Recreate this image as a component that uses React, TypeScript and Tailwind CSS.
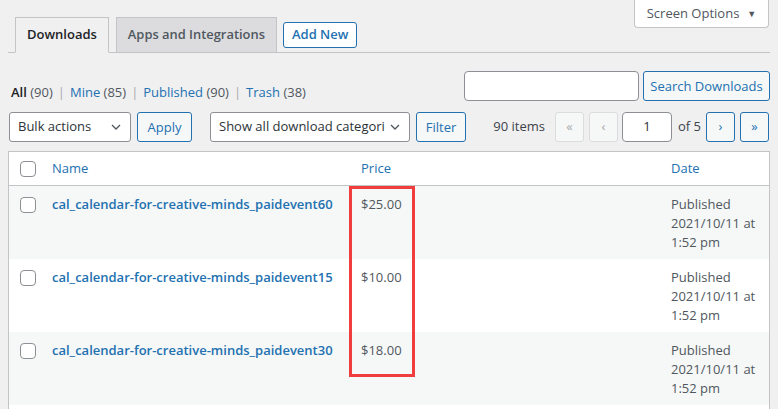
import { type ReactNode } from "react";

type Row = {
	title: string;
	price: string;
};

const rows: Row[] = [
	{ title: "cal_calendar-for-creative-minds_paidevent60", price: "$25.00" },
	{ title: "cal_calendar-for-creative-minds_paidevent15", price: "$10.00" },
	{ title: "cal_calendar-for-creative-minds_paidevent30", price: "$18.00" },
	{ title: "cal_calendar-for-creative-minds_paidevent45", price: "$20.00" },
];

function Chevron() {
	return (
		<svg width="16" height="16" viewBox="0 0 20 20" className="shrink-0 text-[#50575e]">
			<path d="M5 7.5l5 5 5-5" fill="none" stroke="currentColor" strokeWidth="1.6" />
		</svg>
	);
}

function Checkbox() {
	return <span className="block w-4 h-4 border border-[#8c8f94] rounded-[4px] bg-white" />;
}

function Button({ children, className = "" }: { children: ReactNode; className?: string }) {
	return (
		<button
			type="button"
			className={
				"shrink-0 h-[30px] flex items-center justify-center border border-[#2271b1] rounded-[3px] bg-[#f6f7f7] text-[#2271b1] text-[13px] leading-none whitespace-nowrap " +
				className
			}
		>
			{children}
		</button>
	);
}

function PageButton({ label, disabled }: { label: string; disabled?: boolean }) {
	return (
		<span
			className={
				"shrink-0 flex items-center justify-center w-[29px] h-[30px] rounded-[3px] border text-[13px] " +
				(disabled
					? "border-[#dcdcde] bg-[#f6f7f7] text-[#a7aaad]"
					: "border-[#2271b1] bg-[#f6f7f7] text-[#2271b1]")
			}
		>
			{label}
		</span>
	);
}

export default function App() {
	return (
		<div className="w-full h-[409px] overflow-hidden whitespace-nowrap bg-[#f0f0f1] text-[#3c434a] text-[13px] font-['Open_Sans',sans-serif]">
			{/* Tabs + screen options */}
			<div className="mx-2 flex justify-between items-start border-b border-[#c3c4c7]">
				<div className="flex items-center gap-[6px] pt-[17px] pl-[7px]">
					<span className="-mb-px h-[36px] px-[11px] flex items-center border border-[#c3c4c7] border-b-[#f0f0f1] bg-[#f0f0f1] text-[13px] font-semibold text-[#1d2327]">
						Downloads
					</span>
					<span className="-mb-px ml-[1px] h-[36px] px-[11px] flex items-center border border-[#c3c4c7] bg-[#dcdcde] text-[12.9px] font-semibold text-[#50575e]">
						Apps and Integrations
					</span>
					<span className="h-[26px] px-[8px] flex items-center border border-[#2271b1] rounded-[3px] bg-white text-[13px] font-semibold text-[#2271b1]">
						Add New
					</span>
				</div>
				<div className="mr-px h-[28px] w-[135px] flex items-center justify-center gap-[8px] border border-t-0 border-[#c3c4c7] rounded-b-[4px] bg-white text-[#50575e]">
					<span>Screen Options</span>
					<span className="text-[9px]">▼</span>
				</div>
			</div>

			{/* Views + search */}
			<div className="mt-[18px] ml-[11px] mr-2 flex justify-between items-start">
				<div className="mt-[12px] leading-[19px]">
					<span className="font-semibold text-[#1d2327]">All</span> <span className="text-[#50575e]">(90)</span>
					<span className="mx-[5px] text-[#a7aaad]">|</span>
					<span className="text-[#2271b1]">Mine</span> <span className="text-[#50575e]">(85)</span>
					<span className="mx-[5px] text-[#a7aaad]">|</span>
					<span className="text-[#2271b1]">Published</span> <span className="text-[#50575e]">(90)</span>
					<span className="mx-[5px] text-[#a7aaad]">|</span>
					<span className="text-[#2271b1]">Trash</span> <span className="text-[#50575e]">(38)</span>
				</div>
				<div className="flex gap-[4px]">
					<span className="w-[175px] h-[30px] border border-[#8c8f94] rounded-[4px] bg-white" />
					<Button className="w-[127px]">Search Downloads</Button>
				</div>
			</div>

			{/* Toolbar */}
			<div className="mt-[10px] ml-[9px] mr-[9px] flex items-center">
				<span className="shrink-0 w-[122px] h-[30px] pl-[8px] pr-[6px] flex items-center justify-between border border-[#8c8f94] rounded-[3px] bg-white text-[#2c3338]">
					Bulk actions
					<Chevron />
				</span>
				<Button className="ml-[6px] w-[55px]">Apply</Button>
				<span className="shrink-0 ml-[18px] w-[200px] h-[30px] pl-[8px] pr-[6px] flex items-center justify-between border border-[#8c8f94] rounded-[3px] bg-white text-[#2c3338]">
					<span className="overflow-hidden w-[166px]">Show all download categories</span>
					<Chevron />
				</span>
				<Button className="ml-[6px] w-[50px]">Filter</Button>
				<span className="ml-auto shrink-0 text-[#3c434a]">90 items</span>
				<span className="ml-[10px] flex items-center">
					<PageButton label="«" disabled />
					<span className="ml-[5px]">
						<PageButton label="‹" disabled />
					</span>
					<span className="shrink-0 ml-[4px] w-[50px] h-[30px] flex items-center justify-center border border-[#8c8f94] rounded-[4px] bg-white text-[#2c3338]">
						1
					</span>
					<span className="shrink-0 ml-[6px] mr-[5px]">of 5</span>
					<PageButton label="›" />
					<span className="ml-[5px]">
						<PageButton label="»" />
					</span>
				</span>
			</div>

			{/* Table */}
			<div className="relative mt-[9px] mx-2 border border-[#c3c4c7] bg-white">
				<div className="grid grid-cols-[33px_309px_310px_1fr] h-[34px] items-center border-b border-[#c3c4c7] text-[#2271b1]">
					<span className="pl-[11px]">
						<Checkbox />
					</span>
					<span className="pl-[10px]">Name</span>
					<span className="pl-[10px]">Price</span>
					<span className="pl-[10px]">Date</span>
				</div>
				{rows.map((row, i) => (
					<div
						key={row.title}
						className={
							"grid grid-cols-[33px_309px_310px_1fr] h-[73px] items-start leading-[19px] " +
							(i % 2 === 0 ? "bg-[#f6f7f7]" : "bg-white")
						}
					>
						<span className="pl-[11px] pt-[11px]">
							<Checkbox />
						</span>
						<span className="pl-[10px] pt-[9px] font-semibold text-[#2271b1]">{row.title}</span>
						<span className="pl-[10px] pt-[9px] text-[#50575e]">{row.price}</span>
						<span className="pl-[10px] pt-[9px] text-[#50575e]">
							Published
							<br />
							2021/10/11 at
							<br />
							1:52 pm
						</span>
					</div>
				))}
				{/* annotation box */}
				<div className="absolute left-[340px] top-[34px] w-[66px] h-[191px] border-[3px] border-[#f03e3e]" />
			</div>
		</div>
	);
}
